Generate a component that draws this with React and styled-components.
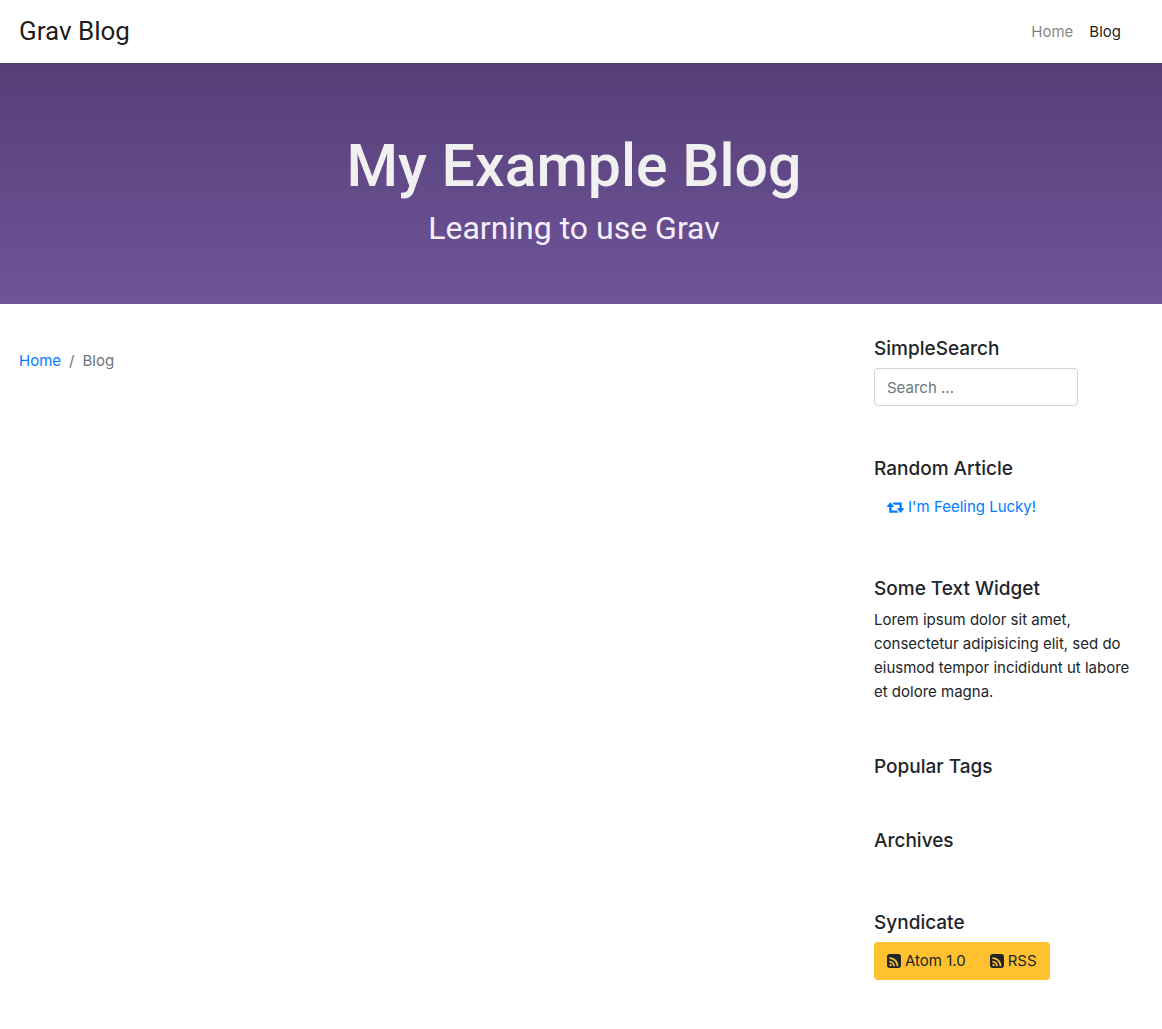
import React from 'react';
import styled, { createGlobalStyle } from 'styled-components';

const GlobalStyle = createGlobalStyle`
  *, *::before, *::after { box-sizing: border-box; }
  body {
    margin: 0;
    background: #fff;
    color: #212529;
    font-family: Inter, Roboto, sans-serif;
    font-size: 15px;
    line-height: 24px;
  }
  h1, h2, h3, p { margin: 0; }
  a { color: #007bff; text-decoration: none; }
`;

const Navbar = styled.header`
  display: flex;
  align-items: center;
  justify-content: space-between;
  padding: 12px 33px 12px 19px;
`;

const Brand = styled.a`
  color: rgba(0, 0, 0, 0.9);
  font-family: Roboto, Inter, sans-serif;
  font-size: 26px;
  line-height: 39px;
`;

const NavLinks = styled.nav`
  display: flex;
`;

const NavLink = styled.a`
  padding: 0 8px;
  color: ${({ $active }) => ($active ? 'rgba(0, 0, 0, 0.9)' : 'rgba(0, 0, 0, 0.5)')};
`;

const Hero = styled.section`
  padding: 64px 14px 56px 0;
  background: linear-gradient(#563f77, #6f5499);
  color: #f0f0f0;
  font-family: Roboto, Inter, sans-serif;
  text-align: center;
`;

const HeroTitle = styled.h1`
  font-size: 59px;
  font-weight: 500;
  line-height: 77px;
`;

const HeroSubtitle = styled.h2`
  margin-top: 4px;
  color: #f5f0fa;
  font-size: 32px;
  font-weight: 400;
  line-height: 40px;
`;

const Content = styled.div`
  display: grid;
  grid-template-columns: minmax(0, 3fr) minmax(0, 1fr);
  padding: 32px 18px 48px 4px;
`;

const Main = styled.main`
  padding: 13px 15px 0;
`;

const Breadcrumb = styled.nav`
  display: flex;
  gap: 8px;
  color: #6c757d;
`;

const Sidebar = styled.aside`
  display: flex;
  flex-direction: column;
  gap: 50px;
  padding: 0 12px 0 15px;
`;

const Widget = styled.section`
  display: flex;
  flex-direction: column;
  align-items: flex-start;
  gap: 8px;
`;

const WidgetTitle = styled.h3`
  padding-top: 2px;
  font-size: 19px;
  font-weight: 500;
  line-height: 22px;
`;

const SearchInput = styled.input`
  width: 204px;
  max-width: 100%;
  height: 38px;
  padding: 6px 12px;
  border: 1px solid #ced4da;
  border-radius: 4px;
  background: #fff;
  color: #495057;
  font: inherit;
  &::placeholder { color: #6c757d; opacity: 1; }
`;

const ButtonLink = styled.a`
  display: inline-flex;
  align-items: center;
  gap: 4px;
  padding: 7px 13px;
  border-radius: 4px;
  color: ${({ $tone }) => ($tone === 'warning' ? '#212529' : '#007bff')};
  background: ${({ $tone }) => ($tone === 'warning' ? '#ffc12f' : 'transparent')};
`;

const ButtonGroup = styled.div`
  display: flex;
  ${ButtonLink}:first-child { border-radius: 4px 0 0 4px; padding-right: 12px; }
  ${ButtonLink}:last-child { border-radius: 0 4px 4px 0; padding-left: 12px; }
`;

const Icon = styled.svg`
  flex: none;
  fill: currentColor;
`;

const RetweetIcon = () => (
  <Icon width="17" height="16" viewBox="0 0 1920 1792" aria-hidden="true">
    <path d="M1280 1504q0 13-9.5 22.5t-22.5 9.5h-960q-8 0-13.5-2t-9-7-5.5-8-3-11.5-1-11.5v-600h-192q-26 0-45-19t-19-45q0-24 15-41l320-384q19-22 49-22t49 22l320 384q15 17 15 41 0 26-19 45t-45 19h-192v384h576q16 0 25 11l160 192q7 10 7 21zm640-416q0 24-15 41l-320 384q-20 23-49 23t-49-23l-320-384q-15-17-15-41 0-26 19-45t45-19h192v-384h-576q-16 0-25-12l-160-192q-7-9-7-20 0-13 9.5-22.5t22.5-9.5h960q8 0 13.5 2t9 7 5.5 8 3 11.5 1 11.5v600h192q26 0 45 19t19 45z" />
  </Icon>
);

const RssIcon = () => (
  <Icon width="14" height="14" viewBox="128 128 1536 1536" aria-hidden="true">
    <path d="M640 1344q0-53-37.5-90.5t-90.5-37.5-90.5 37.5-37.5 90.5 37.5 90.5 90.5 37.5 90.5-37.5 37.5-90.5zm351 94q-13-232-177-396t-396-177q-14-1-24 9t-10 23v128q0 13 8.5 22t21.5 10q154 11 264 121t121 264q1 13 10 21.5t22 8.5h128q13 0 23-10t9-24zm384 1q-5-154-56-297.5t-139.5-260-205-205-260-139.5-297.5-56q-14-1-23 9-10 10-10 23v128q0 13 9 22t22 10q204 7 378 111.5t278.5 278.5 111.5 378q1 13 10 22t22 9h128q13 0 23-10 11-9 9-23zm289-1023v960q0 119-84.5 203.5t-203.5 84.5h-960q-119 0-203.5-84.5t-84.5-203.5v-960q0-119 84.5-203.5t203.5-84.5h960q119 0 203.5 84.5t84.5 203.5z" />
  </Icon>
);

export default function App() {
  return (
    <>
      <GlobalStyle />
      <Navbar>
        <Brand href="#home">Grav Blog</Brand>
        <NavLinks aria-label="Main">
          <NavLink href="#home">Home</NavLink>
          <NavLink href="#blog" $active aria-current="page">Blog</NavLink>
        </NavLinks>
      </Navbar>
      <Hero>
        <HeroTitle>My Example Blog</HeroTitle>
        <HeroSubtitle>Learning to use Grav</HeroSubtitle>
      </Hero>
      <Content>
        <Main>
          <Breadcrumb aria-label="Breadcrumb">
            <a href="#home">Home</a>
            <span>/</span>
            <span>Blog</span>
          </Breadcrumb>
        </Main>
        <Sidebar>
          <Widget>
            <WidgetTitle as="label" htmlFor="search">SimpleSearch</WidgetTitle>
            <SearchInput id="search" type="text" placeholder="Search ..." />
          </Widget>
          <Widget>
            <WidgetTitle>Random Article</WidgetTitle>
            <ButtonLink href="#random"><RetweetIcon />I'm Feeling Lucky!</ButtonLink>
          </Widget>
          <Widget>
            <WidgetTitle>Some Text Widget</WidgetTitle>
            <p>Lorem ipsum dolor sit amet, consectetur adipisicing elit, sed do eiusmod tempor incididunt ut labore et dolore magna.</p>
          </Widget>
          <Widget>
            <WidgetTitle>Popular Tags</WidgetTitle>
          </Widget>
          <Widget>
            <WidgetTitle>Archives</WidgetTitle>
            <div />
          </Widget>
          <Widget>
            <WidgetTitle>Syndicate</WidgetTitle>
            <ButtonGroup>
              <ButtonLink href="#atom" $tone="warning"><RssIcon />Atom 1.0</ButtonLink>
              <ButtonLink href="#rss" $tone="warning"><RssIcon />RSS</ButtonLink>
            </ButtonGroup>
          </Widget>
        </Sidebar>
      </Content>
    </>
  );
}
